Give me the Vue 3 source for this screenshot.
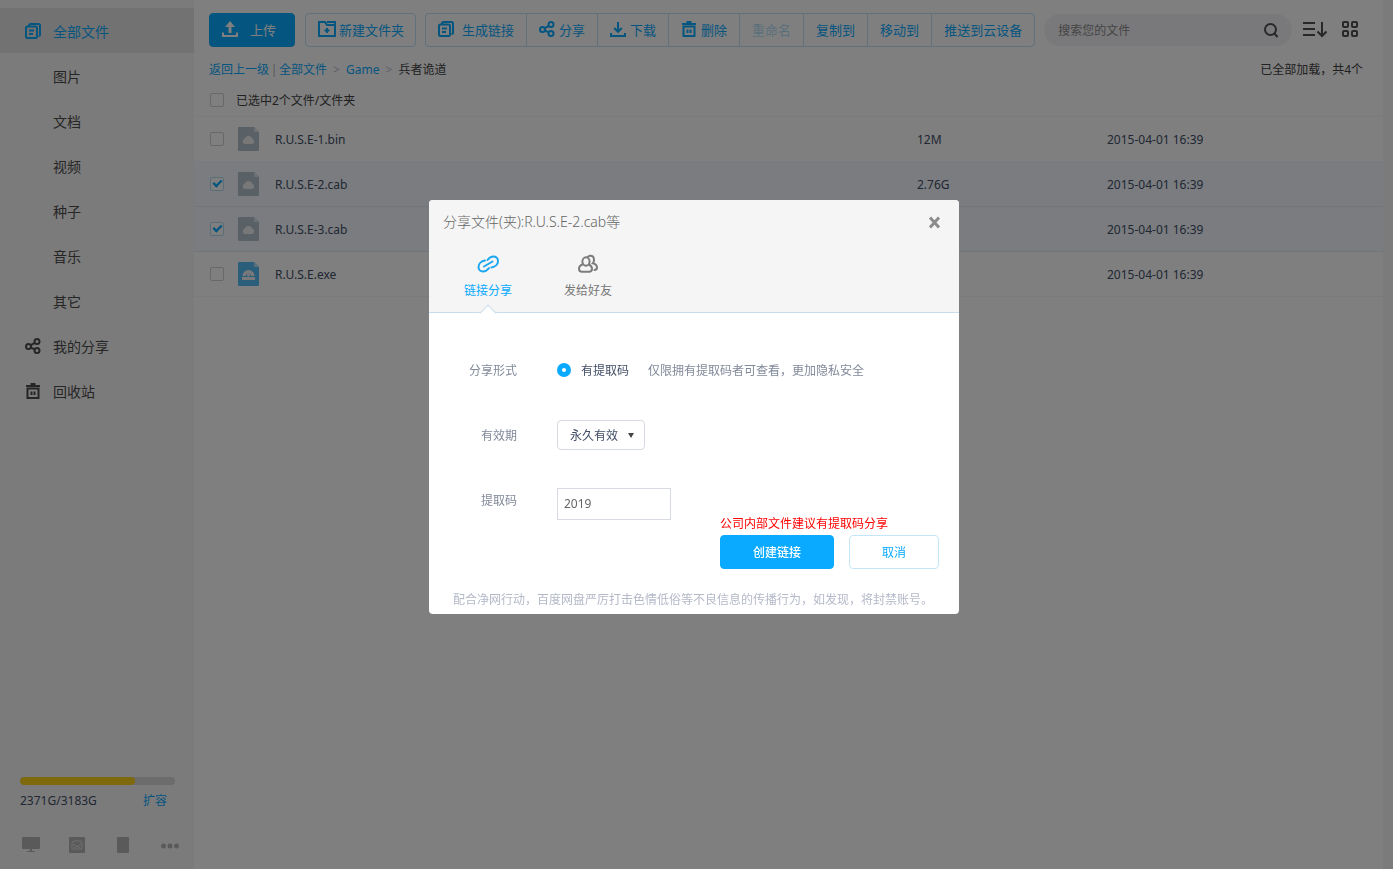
<script setup>
import { ref, computed } from 'vue';

const subMenus = ['图片', '文档', '视频', '种子', '音乐', '其它'];

const files = ref([
  { name: 'R.U.S.E-1.bin', size: '12M', time: '2015-04-01 16:39', type: 'other', checked: false },
  { name: 'R.U.S.E-2.cab', size: '2.76G', time: '2015-04-01 16:39', type: 'other', checked: true },
  { name: 'R.U.S.E-3.cab', size: '2.76G', time: '2015-04-01 16:39', type: 'other', checked: true },
  { name: 'R.U.S.E.exe', size: '1.2M', time: '2015-04-01 16:39', type: 'exe', checked: false },
]);

const checkedCount = computed(() => files.value.filter((f) => f.checked).length);
const allChecked = computed(() => checkedCount.value === files.value.length);

const toggleAll = (event) => {
  files.value.forEach((f) => {
    f.checked = event.target.checked;
  });
}

// 容量
const used = 2371;
const total = 3183;
const usedPercent = computed(() => (used / total) * 100 + '%');

// 分享弹窗
const showShare = ref(true);
const shareTab = ref('link');
const period = ref('forever');
const code = ref('2019');
const keyword = ref('');
</script>

<template>
  <div class="page">
    <aside class="sidebar">
      <nav class="menu">
        <a href="#" class="menu-item active">
          <svg class="icon" viewBox="0 0 16 16">
            <path d="M4 3.5V2.5a1.5 1.5 0 0 1 1.5-1.5h8a1.5 1.5 0 0 1 1.5 1.5v9a1.5 1.5 0 0 1-1.5 1.5" />
            <rect x="1" y="3.5" width="11" height="11.5" rx="1.5" />
            <path d="M4 7.5h5M4 11h4" />
          </svg>
          全部文件
        </a>
        <a v-for="item in subMenus" :key="item" href="#" class="menu-item sub">{{ item }}</a>
        <a href="#" class="menu-item">
          <svg class="icon" viewBox="0 0 16 16">
            <circle cx="3.5" cy="8.5" r="2.5" />
            <circle cx="12" cy="3.5" r="2.5" />
            <circle cx="12" cy="12.5" r="2.5" />
            <path d="M5.8 7.2l4-2.4M6 9.6l3.7 1.8" />
          </svg>
          我的分享
        </a>
        <a href="#" class="menu-item">
          <svg class="icon" viewBox="0 0 16 16">
            <path d="M1 3h14M5.5 1h5M2.5 5.5h11V15h-11zM6.5 8.5v3.5M9.5 8.5v3.5" />
          </svg>
          回收站
        </a>
      </nav>
      <div class="side-foot">
        <div class="quota-bar">
          <div class="quota-used" :style="{ width: usedPercent }"></div>
        </div>
        <div class="quota-text">
          <span>{{ used }}G/{{ total }}G</span>
          <a href="#">扩容</a>
        </div>
        <div class="clients">
          <svg width="20" height="18" viewBox="0 0 20 18">
            <path d="M3 1h16a1 1 0 0 1 1 1v10a1 1 0 0 1-1 1h-7v2h3v1H7v-1h3v-2H3a1 1 0 0 1-1-1V2a1 1 0 0 1 1-1z" />
          </svg>
          <svg width="18" height="18" viewBox="0 0 18 18">
            <rect x="1" y="1" width="16" height="16" rx="1" />
            <path class="line" d="M4 13V7l1-2h8l1 2v6zM5 8l4 3 4-3M6 12l3-2 3 2" />
          </svg>
          <svg width="18" height="18" viewBox="0 0 18 18">
            <rect x="3" y="1" width="12" height="16" rx="1" />
          </svg>
          <svg width="20" height="18" viewBox="0 0 20 18">
            <circle cx="3.5" cy="10" r="2.5" />
            <circle cx="10" cy="10" r="2.5" />
            <circle cx="16.5" cy="10" r="2.5" />
          </svg>
        </div>
      </div>
    </aside>

    <main class="content">
      <div class="toolbar">
        <button class="btn primary">
          <svg class="icon" viewBox="0 0 16 16">
            <path d="M1 11.5V15h14v-3.5" />
            <path d="M8 12V4" stroke-width="3" />
            <path d="M8 0l5 6H3z" fill="currentColor" stroke="none" />
          </svg>
          上传
        </button>
        <button class="btn new-folder">
          <svg class="icon wide" viewBox="0 0 18 16">
            <path d="M1 15V1h6l2 3h8v11zM9 1h8v3M9 7v5M6.5 9.5h5" />
          </svg>
          新建文件夹
        </button>
        <div class="group">
          <button class="btn link">
            <svg class="icon" viewBox="0 0 16 16">
              <path d="M4 3.5V2.5a1.5 1.5 0 0 1 1.5-1.5h8a1.5 1.5 0 0 1 1.5 1.5v9a1.5 1.5 0 0 1-1.5 1.5" />
              <rect x="1" y="3.5" width="11" height="11.5" rx="1.5" />
              <path d="M4 7.5h5M4 11h4" />
            </svg>
            生成链接
          </button>
          <button class="btn">
            <svg class="icon" viewBox="0 0 16 16">
              <circle cx="3.5" cy="8.5" r="2.5" />
              <circle cx="12" cy="3.5" r="2.5" />
              <circle cx="12" cy="12.5" r="2.5" />
              <path d="M5.8 7.2l4-2.4M6 9.6l3.7 1.8" />
            </svg>
            分享
          </button>
          <button class="btn">
            <svg class="icon" viewBox="0 0 16 16">
              <path d="M8 1v9.5M4.2 7L8 10.8 11.8 7M1 12v3h14v-3" />
            </svg>
            下载
          </button>
          <button class="btn">
            <svg class="icon" viewBox="0 0 16 16">
              <path d="M1 3h14M5.5 1h5M2.5 5.5h11V15h-11zM6.5 8.5v3.5M9.5 8.5v3.5" />
            </svg>
            删除
          </button>
          <button class="btn" disabled>重命名</button>
          <button class="btn">复制到</button>
          <button class="btn">移动到</button>
          <button class="btn">推送到云设备</button>
        </div>
        <div class="search">
          <input v-model="keyword" type="text" placeholder="搜索您的文件" aria-label="搜索您的文件" />
          <button class="icon-btn" aria-label="搜索">
            <svg class="icon" viewBox="0 0 16 16">
              <circle cx="7.5" cy="7.5" r="5.5" />
              <path d="M11 11l3.5 4" />
            </svg>
          </button>
        </div>
        <button class="icon-btn" aria-label="排序">
          <svg width="24" height="18" viewBox="0 0 24 18">
            <path d="M0 3h12M0 9h12M0 15h12M19 2v14M14.5 11.5L19 16l4.5-4.5" />
          </svg>
        </button>
        <button class="icon-btn grid-btn" aria-label="网格视图">
          <svg width="16" height="16" viewBox="0 0 16 16">
            <rect x="1" y="1" width="5" height="5" rx="1" />
            <rect x="10" y="1" width="5" height="5" rx="1" />
            <rect x="1" y="10" width="5" height="5" rx="1" />
            <rect x="10" y="10" width="5" height="5" rx="1" />
          </svg>
        </button>
      </div>

      <div class="crumbs">
        <a href="#">返回上一级</a>
        <span class="bar">|</span>
        <a href="#">全部文件</a>
        <span class="gt">&gt;</span>
        <a href="#">Game</a>
        <span class="gt">&gt;</span>
        <span>兵者诡道</span>
        <span class="loaded">已全部加载，共{{ files.length }}个</span>
      </div>

      <table class="files">
        <colgroup>
          <col class="col-check" />
          <col class="col-icon" />
          <col />
          <col class="col-size" />
          <col class="col-time" />
        </colgroup>
        <thead>
          <tr>
            <th class="check">
              <input id="checkAll" type="checkbox" :checked="allChecked" @change="toggleAll" />
            </th>
            <th colspan="4"><label for="checkAll">已选中{{ checkedCount }}个文件/文件夹</label></th>
          </tr>
        </thead>
        <tbody>
          <tr v-for="file in files" :key="file.name" :class="{ selected: file.checked }">
            <td class="check">
              <input v-model="file.checked" type="checkbox" :aria-label="file.name" />
            </td>
            <td class="file-icon">
              <svg v-if="file.type === 'exe'" width="21" height="24" viewBox="0 0 21 24">
                <path d="M1 0h15l5 5v18a1 1 0 0 1-1 1H1a1 1 0 0 1-1-1V1a1 1 0 0 1 1-1z" fill="#57bdf6" />
                <path d="M16 0l5 5h-5z" fill="#b5e1fb" />
                <path d="M4.5 14a6 6 0 0 1 12 0H13a2.500 2.500 0 0 0-5 0z" fill="#f3f3f3" />
                <circle cx="10.5" cy="13" r="1.5" fill="#f3f3f3" />
                <rect x="4" y="15" width="13" height="3" fill="#f3f3f3" />
              </svg>
              <svg v-else width="21" height="24" viewBox="0 0 21 24">
                <path d="M1 0h15l5 5v18a1 1 0 0 1-1 1H1a1 1 0 0 1-1-1V1a1 1 0 0 1 1-1z" fill="#b3c2cf" />
                <path d="M16 0l5 5h-5z" fill="#d8e2ea" />
                <path d="M7.5 17a2.700 2.700 0 0 1-.8-5.300 4 4 0 0 1 7.600 0 2.700 2.700 0 0 1-.8 5.300z" fill="#f0f0f0" />
              </svg>
            </td>
            <td>{{ file.name }}</td>
            <td>{{ file.size }}</td>
            <td>{{ file.time }}</td>
          </tr>
        </tbody>
      </table>
    </main>

    <div v-if="showShare" class="mask">
      <section class="dialog" role="dialog" aria-labelledby="dialogTitle">
        <header class="dialog-head">
          <div class="title-row">
            <h2 id="dialogTitle">分享文件(夹):R.U.S.E-2.cab等</h2>
            <button class="close" aria-label="关闭" @click="showShare = false">
              <svg width="13" height="13" viewBox="0 0 13 13">
                <path d="M2 1.5l9 10M11 1.5l-9 10" />
              </svg>
            </button>
          </div>
          <div class="tabs">
            <button class="tab" :class="{ on: shareTab === 'link' }" @click="shareTab = 'link'">
              <svg width="24" height="20" viewBox="0 0 24 20">
                <path d="M9 6.5C5.500 7 2.500 9.500 2.500 13c0 2.800 2 4.500 4.500 4.500 2.300 0 4.300-1.200 6-3.500" />
                <path d="M11.500 6c1.700-2.300 3.700-3.500 6-3.500C20 2.500 22 4.200 22 7c0 3.500-3 6-6.500 6.500" />
                <path d="M8 12.500l8.500-5" />
              </svg>
              链接分享
            </button>
            <button class="tab" :class="{ on: shareTab === 'friend' }" @click="shareTab = 'friend'">
              <svg width="24" height="20" viewBox="0 0 24 20">
                <ellipse cx="10" cy="7.500" rx="3.600" ry="4.200" />
                <path d="M6.800 10.200C4.500 11 3 12.700 3 15c0 1.800 1 2.700 3 2.700h7c2 0 3-.9 3-2.700 0-2.100-1.200-3.700-3-4.500" />
                <path d="M11.500 3.200c.7-1 1.700-1.500 2.800-1.500 2.200 0 3.700 1.800 3.700 4.200 0 1.400-.4 2.500-1.200 3.400C19.500 10 21 11.500 21 13.500c0 1.600-.9 2.400-2.500 2.500" />
              </svg>
              发给好友
            </button>
          </div>
        </header>

        <div class="form">
          <div class="row">
            <span class="label">分享形式</span>
            <input id="shareCode" type="radio" name="shareType" checked />
            <label for="shareCode" class="radio-text">有提取码</label>
            <span class="hint">仅限拥有提取码者可查看，更加隐私安全</span>
          </div>
          <div class="row">
            <label class="label" for="period">有效期</label>
            <div class="select-wrap">
              <select id="period" v-model="period">
                <option value="forever">永久有效</option>
                <option value="7">7天</option>
                <option value="1">1天</option>
              </select>
              <svg width="6" height="5" viewBox="0 0 6 5"><path d="M0 0h6L3 5z" fill="#444" /></svg>
            </div>
          </div>
          <div class="row">
            <label class="label" for="code">提取码</label>
            <input id="code" v-model="code" class="code" type="text" />
          </div>
        </div>

        <div class="actions">
          <p class="warn">公司内部文件建议有提取码分享</p>
          <div class="action-btns">
            <button class="create">创建链接</button>
            <button class="cancel" @click="showShare = false">取消</button>
          </div>
        </div>
        <p class="notice">配合净网行动，百度网盘严厉打击色情低俗等不良信息的传播行为，如发现，将封禁账号。</p>
      </section>
    </div>
  </div>
</template>

<style>
body {
  margin: 0;
  background: #f7f7f7;
}
</style>

<style scoped>
.page {
  display: flex;
  min-height: 100vh;
  box-sizing: border-box;
  padding-right: 10px;
  font-family: "Noto Sans", "Noto Sans CJK SC", sans-serif;
  font-size: 12px;
  color: #424e67;
}
button,
input,
select {
  font-family: inherit;
}
button {
  cursor: pointer;
}
a {
  color: #09aaff;
  text-decoration: none;
}
.icon {
  width: 16px;
  height: 16px;
  flex: none;
  fill: none;
  stroke: currentColor;
  stroke-width: 2;
}
.icon.wide {
  width: 18px;
}

/* 左侧菜单 */
.sidebar {
  display: flex;
  flex-direction: column;
  flex: none;
  width: 194px;
  box-sizing: border-box;
  padding: 8px 0 15px;
  background: #f7f7f7;
}
.menu-item {
  display: flex;
  align-items: center;
  gap: 12px;
  height: 45px;
  padding-left: 25px;
  font-size: 14px;
  color: #4c4c4c;
}
.menu-item.sub {
  padding-left: 53px;
}
.menu-item.active {
  color: #09aaff;
  background: #e5e5e5;
}
.side-foot {
  margin-top: auto;
  padding: 0 14px 0 20px;
}
.quota-bar {
  width: 155px;
  height: 8px;
  border-radius: 4px;
  background: #d8d8d8;
  overflow: hidden;
}
.quota-used {
  height: 100%;
  border-radius: 4px;
  background: #ffd21a;
}
.quota-text {
  display: flex;
  justify-content: space-between;
  padding: 7px 13px 0 0;
  line-height: 18px;
}
.clients {
  display: flex;
  justify-content: space-between;
  margin-top: 26px;
  fill: #b4b4b4;
}
.clients .line {
  fill: none;
  stroke: #dedede;
}

/* 工具栏 */
.content {
  flex: 1;
  min-width: 0;
  padding-top: 13px;
  background: #fff;
}
.toolbar {
  display: flex;
  align-items: center;
  padding: 0 25px 0 15px;
}
.btn {
  display: flex;
  align-items: center;
  justify-content: center;
  gap: 4px;
  height: 34px;
  box-sizing: border-box;
  padding: 0 12px 2px;
  border: 1px solid #c0e3f7;
  border-radius: 4px;
  background: #fff;
  font-size: 13px;
  color: #09aaff;
  white-space: nowrap;
}
.btn.primary {
  justify-content: flex-start;
  gap: 12px;
  width: 86px;
  margin-right: 10px;
  border-color: #09aaff;
  background: #09aaff;
  color: #fff;
}
.btn.new-folder {
  gap: 3px;
  margin-right: 9px;
  padding-right: 11px;
}
.btn.link {
  gap: 8px;
}
.group {
  display: flex;
  margin-right: 9px;
}
.group .btn {
  border-right: 0;
  border-radius: 0;
}
.group .btn:first-child {
  border-radius: 4px 0 0 4px;
}
.group .btn:last-child {
  border-right: 1px solid #c0e3f7;
  border-radius: 0 4px 4px 0;
}
.btn:disabled {
  color: #b5dff7;
}
.search {
  display: flex;
  align-items: center;
  flex: 1;
  min-width: 0;
  height: 32px;
  margin-right: 11px;
  padding: 0 13px 0 14px;
  box-sizing: border-box;
  border-radius: 16px;
  background: #f3f3f6;
}
.search input {
  flex: 1;
  min-width: 0;
  padding: 0;
  border: 0;
  outline: 0;
  background: none;
  font-size: 12px;
}
.search input::placeholder {
  color: #8a8a8a;
}
.icon-btn {
  display: flex;
  padding: 0 0 2px;
  border: 0;
  background: none;
  color: #505050;
}
.icon-btn svg {
  fill: none;
  stroke: currentColor;
  stroke-width: 2;
}
.grid-btn {
  margin-left: 15px;
}
.search .icon-btn {
  padding: 0;
}

/* 面包屑 */
.crumbs {
  display: flex;
  align-items: center;
  height: 24px;
  margin-top: 10px;
  padding: 0 20px 0 15px;
  color: #424242;
}
.bar {
  width: 10px;
  text-align: center;
  color: #b0b0b0;
}
.gt {
  width: 19px;
  text-align: center;
  color: #b8c0cc;
}
.loaded {
  margin-left: auto;
}

/* 文件列表 */
.files {
  width: 100%;
  border-collapse: collapse;
  table-layout: fixed;
}
.col-check {
  width: 42px;
}
.col-icon {
  width: 39px;
}
.col-size {
  width: 190px;
}
.col-time {
  width: 276px;
}
.files th {
  height: 33px;
  padding: 2px 0 0;
  font-weight: normal;
  text-align: left;
  color: #424242;
}
.files td {
  height: 44px;
  padding: 0;
  border-top: 1px solid #f2f6fd;
  border-bottom: 1px solid #f2f6fd;
}
.files tr.selected td {
  background: #f4f9ff;
  border-color: #e2ecf7;
}
.files .check {
  padding-left: 16px;
}
.files .file-icon {
  padding-left: 2px;
}
.file-icon svg {
  display: block;
}
.files input {
  display: grid;
  place-items: center;
  width: 14px;
  height: 14px;
  margin: 0;
  appearance: none;
  border: 1px solid #d0d0d0;
  border-radius: 2px;
  background: #fff;
}
.files input:checked {
  border-color: #b4dcf2;
}
.files input:checked::after {
  content: "";
  width: 8px;
  height: 4px;
  margin-bottom: 3px;
  border: solid #09aaff;
  border-width: 0 0 3px 3px;
  transform: rotate(-45deg) scale(0.8);
}

/* 分享弹窗 */
.mask {
  position: fixed;
  inset: 0;
  display: flex;
  align-items: flex-start;
  justify-content: center;
  padding: 200px 5px 0 0;
  background: rgba(0, 0, 0, 0.5);
}
.dialog {
  width: 530px;
  border-radius: 4px;
  background: #fff;
  overflow: hidden;
}
.dialog-head {
  background: #f5f5f5;
  border-bottom: 1px solid #c8dcec;
}
.title-row {
  display: flex;
  align-items: center;
  justify-content: space-between;
  height: 44px;
  padding: 0 18px 0 14px;
}
.title-row h2 {
  margin: 0;
  padding-bottom: 2px;
  font-size: 14px;
  font-weight: 300;
  color: #666;
}
.close {
  display: flex;
  padding: 0;
  border: 0;
  background: none;
}
.close svg {
  fill: none;
  stroke: #8c8c8c;
  stroke-width: 3;
}
.tabs {
  display: flex;
  padding-left: 9px;
}
.tab {
  position: relative;
  display: flex;
  flex-direction: column;
  align-items: center;
  gap: 8px;
  width: 100px;
  height: 68px;
  padding: 10px 0 0;
  border: 0;
  background: none;
  font-size: 12px;
  line-height: 18px;
  color: #777;
}
.tab svg {
  fill: none;
  stroke: #7c7c7c;
  stroke-width: 2;
  stroke-linecap: round;
}
.tab.on {
  color: #09aaff;
}
.tab.on svg {
  stroke: #1ba6ef;
}
.tab.on::after {
  content: "";
  position: absolute;
  left: 44px;
  bottom: -7px;
  width: 11px;
  height: 11px;
  border: solid #c8dcec;
  border-width: 1px 0 0 1px;
  background: #fff;
  transform: rotate(45deg);
}
.form {
  padding-top: 24px;
}
.row {
  display: flex;
  align-items: center;
  height: 65px;
}
.label {
  width: 88px;
  margin-right: 40px;
  text-align: right;
  color: #818999;
}
.row input[type="radio"] {
  width: 14px;
  height: 14px;
  margin: 0;
  appearance: none;
  border: 5px solid #09aaff;
  border-radius: 50%;
}
.radio-text {
  margin: 0 19px 0 10px;
}
.hint {
  color: #818999;
}
.select-wrap {
  position: relative;
}
.select-wrap select {
  display: block;
  width: 88px;
  height: 30px;
  padding: 2px 12px 0;
  appearance: none;
  border: 1px solid #d5d9e0;
  border-radius: 4px;
  background: #fff;
  font-size: 12px;
  color: #424e67;
}
.select-wrap svg {
  position: absolute;
  right: 11px;
  top: 13px;
  pointer-events: none;
}
.code {
  width: 114px;
  height: 32px;
  box-sizing: border-box;
  margin-top: 8px;
  padding: 0 6px;
  border: 1px solid #d8dce2;
  font-size: 12px;
  color: #666;
}
.actions {
  display: flex;
  flex-direction: column;
  align-items: flex-end;
  margin-top: -18px;
  padding-right: 20px;
}
.warn {
  width: 219px;
  margin: 0 0 1px;
  line-height: 20px;
  color: #f00;
}
.action-btns {
  display: flex;
  gap: 15px;
}
.create,
.cancel {
  height: 34px;
  padding: 0;
  border: 1px solid #09aaff;
  border-radius: 4px;
  font-size: 12px;
}
.create {
  width: 114px;
  background: #09aaff;
  color: #fff;
  font-weight: 500;
}
.cancel {
  width: 90px;
  border-color: #c3e7f9;
  background: #fff;
  color: #09aaff;
}
.notice {
  margin: 0;
  padding: 22px 24px 5px;
  line-height: 18px;
  color: #b4b9c8;
}
</style>
